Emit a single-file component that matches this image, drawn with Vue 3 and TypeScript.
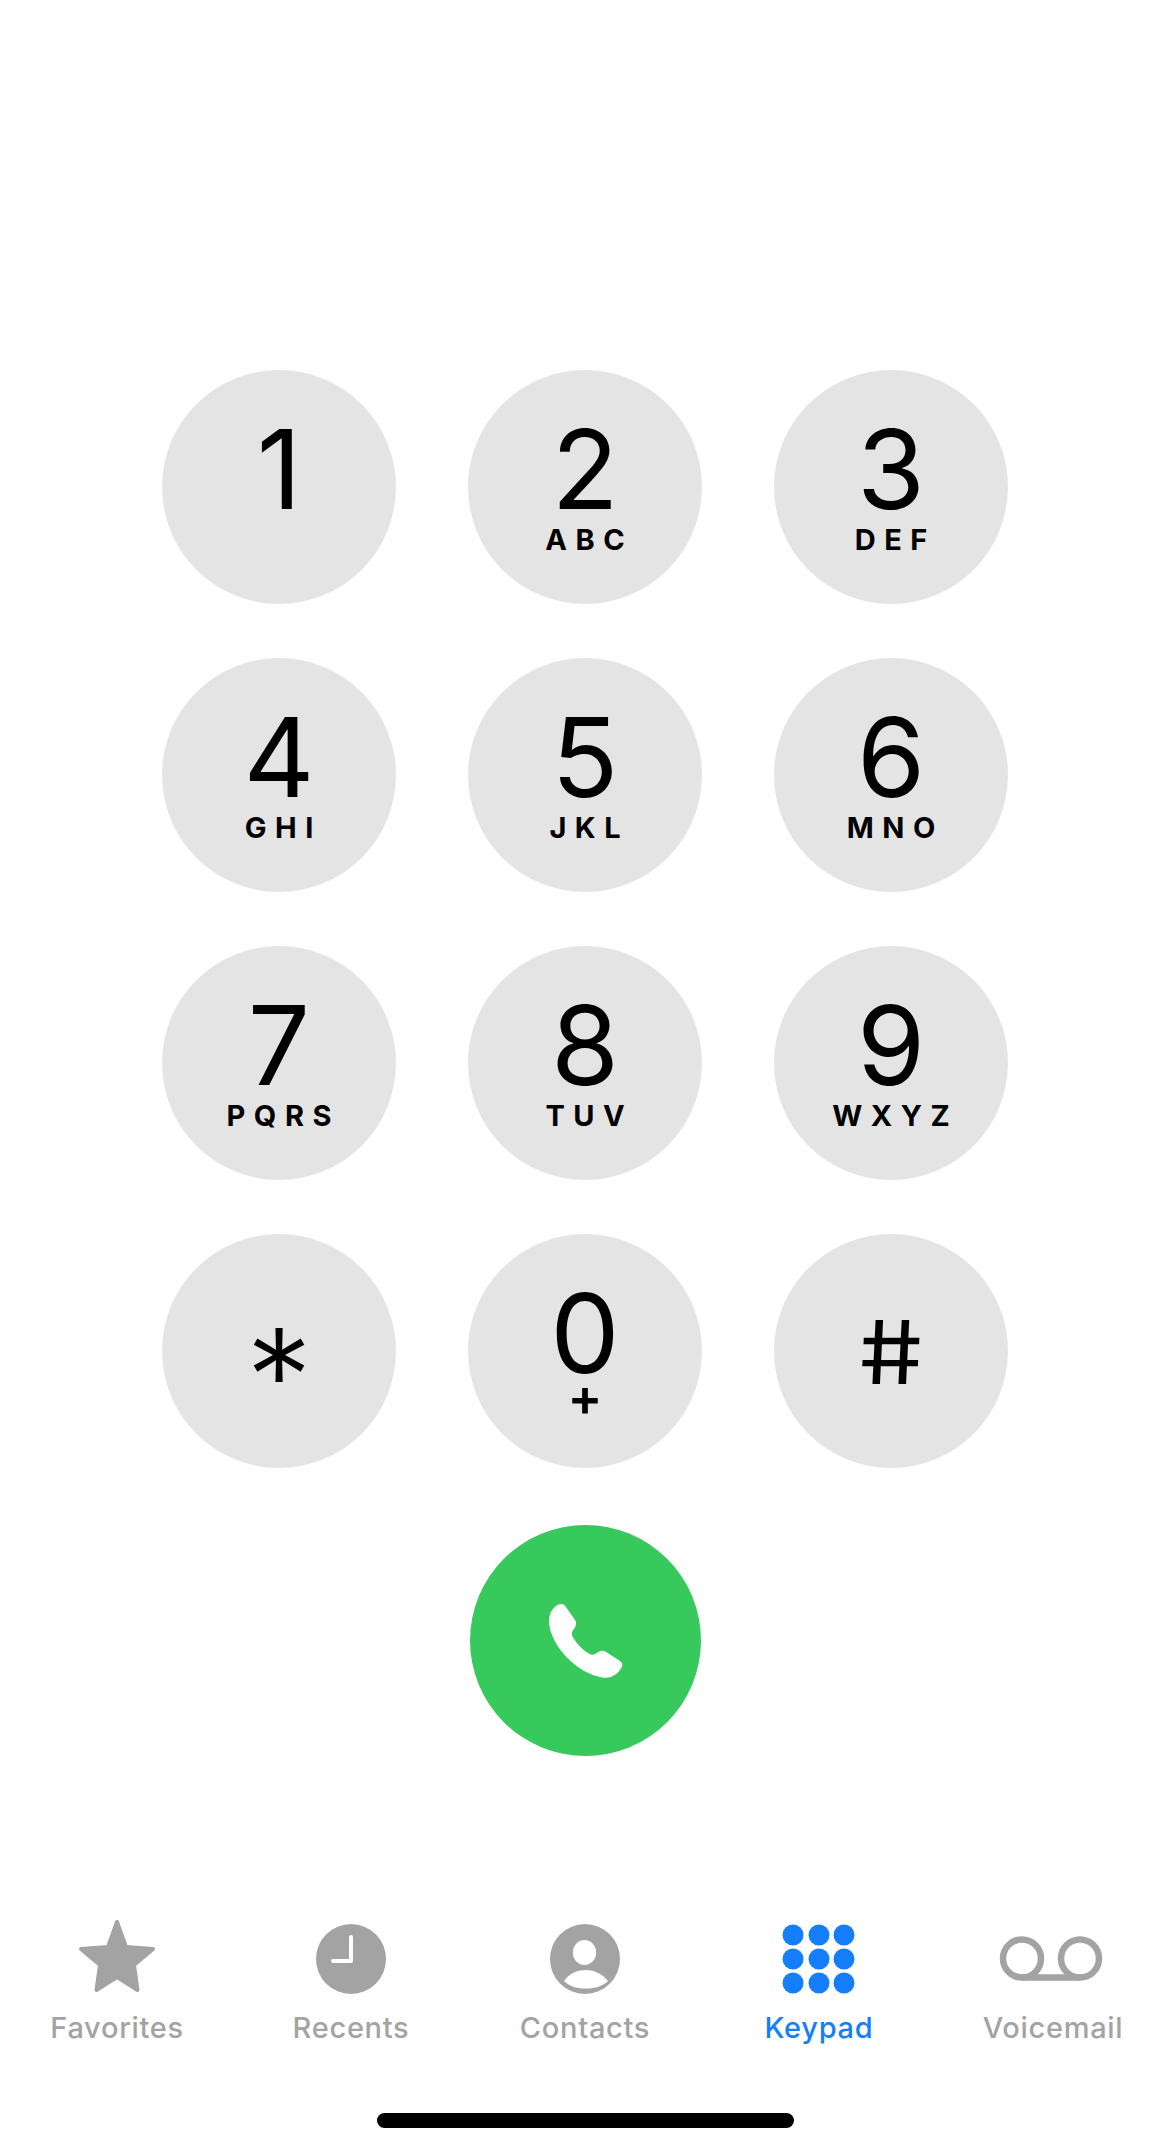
<script setup lang="ts">
interface Key { d: string; l?: string; cls?: string }
const keys: Key[] = [
  { d: '1' }, { d: '2', l: 'ABC' }, { d: '3', l: 'DEF' },
  { d: '4', l: 'GHI' }, { d: '5', l: 'JKL' }, { d: '6', l: 'MNO' },
  { d: '7', l: 'PQRS' }, { d: '8', l: 'TUV' }, { d: '9', l: 'WXYZ' },
  { d: '*', cls: 'star' }, { d: '0', l: '+', cls: 'zero' }, { d: '#', cls: 'hash' },
]
const dots = [16, 40, 64].flatMap((y) => [24, 50, 75].map((x) => ({ x, y })))
</script>

<template>
  <main class="page">
    <section class="pad">
      <button v-for="k in keys" :key="k.d" class="key" :class="k.cls">
        <span class="digit">{{ k.d }}</span>
        <span v-if="k.l" class="letters">{{ k.l }}</span>
      </button>
    </section>

    <button class="call" aria-label="Call">
      <svg viewBox="320 305 232 232" width="77" height="77">
        <path fill="#fff" d="M326 362 C326 335 342 316 360 311 C368 310 373 314 377 320 L405 360 C410 368 408 378 400 388 C394 395 393 403 398 411 C410 432 428 450 448 462 C456 466 463 464 470 459 C478 451 488 449 497 455 L540 483 C548 489 549 495 544 503 C535 520 518 533 497 533 C470 533 425 515 390 482 C350 445 326 398 326 362 Z" />
      </svg>
    </button>

    <nav class="tabs">
      <div class="tab">
        <svg viewBox="0 0 100 76" width="100" height="76">
          <polygon fill="#a3a3a3" stroke="#a3a3a3" stroke-width="4" stroke-linejoin="round" points="50,3 59,28 86,30 67,46 70.5,71 50,58 29.5,71 33,46 14,30 41,28" />
        </svg>
        <span>Favorites</span>
      </div>
      <div class="tab">
        <svg viewBox="0 0 100 76" width="100" height="76">
          <circle cx="50" cy="40" r="35" fill="#a3a3a3" />
          <path d="M50 18 V42 H32" fill="none" stroke="#fff" stroke-width="4" stroke-linecap="round" stroke-linejoin="round" />
        </svg>
        <span>Recents</span>
      </div>
      <div class="tab">
        <svg viewBox="0 0 100 76" width="100" height="76">
          <circle cx="50" cy="40" r="35" fill="#a3a3a3" />
          <ellipse cx="49.5" cy="33.5" rx="11.7" ry="12.5" fill="#fff" />
          <path fill="#fff" d="M29 62 C34 55 41 51 50.5 51 C60 51 67 55 73 62 C68 67 60 69.5 50.5 69.5 C41 69.5 34 67 29 62 Z" />
        </svg>
        <span>Contacts</span>
      </div>
      <div class="tab active">
        <svg viewBox="0 0 100 76" width="100" height="76">
          <circle v-for="(p, i) in dots" :key="i" :cx="p.x" :cy="p.y" r="10.5" fill="#147efb" />
        </svg>
        <span>Keypad</span>
      </div>
      <div class="tab">
        <svg viewBox="0 0 100 76" width="100" height="76">
          <g fill="none" stroke="#a3a3a3" stroke-width="6.5">
            <circle cx="19" cy="39.5" r="19" />
            <circle cx="77" cy="39.5" r="19" />
            <path d="M19 58.5 H77" />
          </g>
        </svg>
        <span>Voicemail</span>
      </div>
    </nav>

    <div class="home"></div>
  </main>
</template>

<style>
html, body { margin: 0; background: #fff; }
</style>

<style scoped>
.page {
  width: 1170px;
  height: 2147px;
  padding-top: 370px;
  box-sizing: border-box;
  display: flex;
  flex-direction: column;
  align-items: center;
  background: #fff;
  font-family: Inter, "Liberation Sans", sans-serif;
  color: #000;
  overflow: hidden;
}
.pad {
  display: grid;
  grid-template-columns: repeat(3, 234px);
  column-gap: 72px;
  row-gap: 54px;
}
.key {
  width: 234px;
  height: 234px;
  border: 0;
  border-radius: 50%;
  background: #e4e4e4;
  padding: 45px 0 0;
  display: flex;
  flex-direction: column;
  align-items: center;
  justify-content: flex-start;
  font-family: inherit;
  color: #000;
}
.digit {
  font-size: 110px;
  line-height: 108px;
  font-weight: 400;
}
.letters {
  margin-top: 2px;
  font-size: 29px;
  line-height: 29px;
  font-weight: 700;
  letter-spacing: 8.5px;
  padding-left: 8.5px;
}
.star .digit {
  font-size: 132px;
  line-height: 132px;
  margin-top: 31px;
  font-weight: 300;
}
.hash .digit {
  font-size: 88px;
  line-height: 88px;
  margin-top: 29px;
  font-weight: 400;
  transform: skewX(8deg) scaleX(1.16);
}
.zero .letters {
  margin-top: -4px;
  font-size: 52px;
  line-height: 29px;
  font-weight: 600;
  letter-spacing: 0;
  padding-left: 0;
}
.call {
  width: 231px;
  height: 231px;
  margin-top: 57px;
  border: 0;
  padding: 0;
  border-radius: 50%;
  background: #37c95c;
  display: flex;
  align-items: center;
  justify-content: center;
}
.tabs {
  display: flex;
  width: 1170px;
  margin-top: 163px;
}
.tab {
  width: 234px;
  display: flex;
  flex-direction: column;
  align-items: center;
  font-size: 29px;
  font-weight: 500;
  letter-spacing: 0.7px;
  line-height: 36px;
  color: #a3a3a3;
}
.tab svg {
  display: block;
  overflow: visible;
}
.tab span {
  margin-top: 15px;
  white-space: nowrap;
}
.tab.active {
  color: #147efb;
}
.home {
  width: 417px;
  height: 15px;
  margin-top: 67px;
  border-radius: 8px;
  background: #000;
}
</style>
